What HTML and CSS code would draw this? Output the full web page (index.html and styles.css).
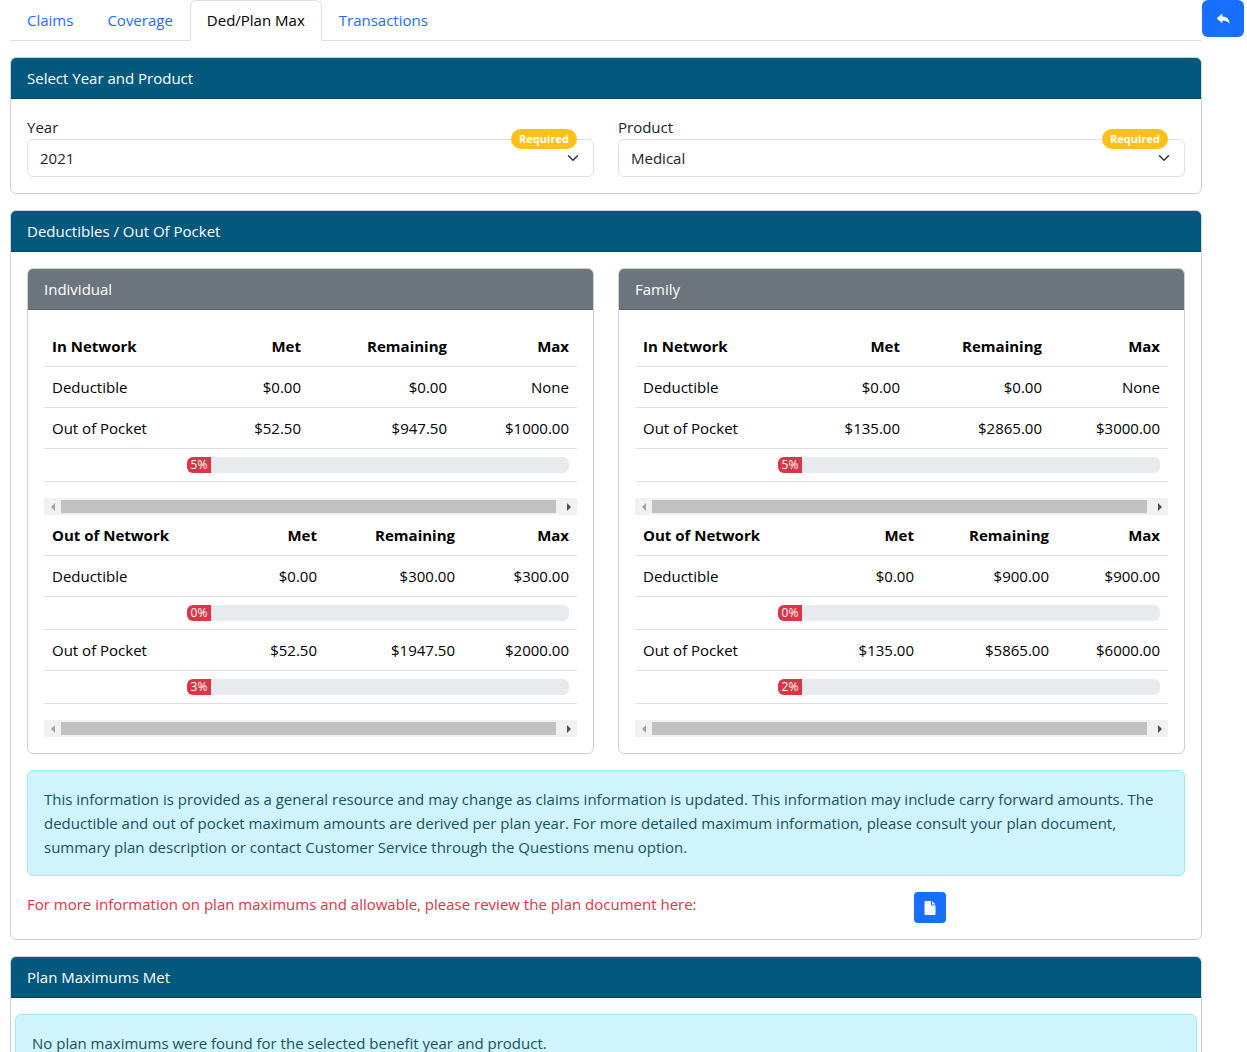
FILE: index.html
```html
<!DOCTYPE html>
<html lang="en">
<head>
<meta charset="utf-8">
<meta name="viewport" content="width=device-width, initial-scale=1">
<title>Ded/Plan Max</title>
<link rel="stylesheet" href="styles.css">
</head>
<body>
<div class="page">
  <main class="content">
    <nav class="tabs" aria-label="Benefit sections">
      <a class="tab" href="#claims">Claims</a>
      <a class="tab" href="#coverage">Coverage</a>
      <a class="tab tab-active" href="#plan-max" aria-current="page">Ded/Plan Max</a>
      <a class="tab" href="#transactions">Transactions</a>
    </nav>

    <section class="card">
      <h2 class="card-header">Select Year and Product</h2>
      <div class="card-body columns">
        <div class="field">
          <label for="year">Year</label>
          <div class="select-wrap">
            <select id="year" class="select" required><option>2021</option></select>
            <svg class="chevron" viewBox="0 0 16 16" aria-hidden="true"><path d="m2 5 6 6 6-6"/></svg>
            <span class="badge">Required</span>
          </div>
        </div>
        <div class="field">
          <label for="product">Product</label>
          <div class="select-wrap">
            <select id="product" class="select" required><option>Medical</option></select>
            <svg class="chevron" viewBox="0 0 16 16" aria-hidden="true"><path d="m2 5 6 6 6-6"/></svg>
            <span class="badge">Required</span>
          </div>
        </div>
      </div>
    </section>

    <section class="card">
      <h2 class="card-header">Deductibles / Out Of Pocket</h2>
      <div class="card-body stack">
        <div class="columns">
          <section class="card">
            <h3 class="card-header card-header-gray">Individual</h3>
            <div class="card-body">
              <table class="amounts">
                <colgroup><col class="w-135"><col class="w-130"><col class="w-146"><col></colgroup>
                <thead><tr><th>In Network</th><th>Met</th><th>Remaining</th><th>Max</th></tr></thead>
                <tbody>
                  <tr><td>Deductible</td><td>$0.00</td><td>$0.00</td><td>None</td></tr>
                  <tr><td>Out of Pocket</td><td>$52.50</td><td>$947.50</td><td>$1000.00</td></tr>
                  <tr><td></td><td colspan="3"><div class="progress"><div class="progress-bar">5%</div></div></td></tr>
                </tbody>
              </table>
              <div class="scrollbar" aria-hidden="true"><span class="arrow arrow-left"></span><span class="thumb"></span><span class="arrow arrow-right"></span></div>
              <table class="amounts">
                <colgroup><col class="w-135"><col class="w-146"><col class="w-138"><col></colgroup>
                <thead><tr><th>Out of Network</th><th>Met</th><th>Remaining</th><th>Max</th></tr></thead>
                <tbody>
                  <tr><td>Deductible</td><td>$0.00</td><td>$300.00</td><td>$300.00</td></tr>
                  <tr><td></td><td colspan="3"><div class="progress"><div class="progress-bar">0%</div></div></td></tr>
                  <tr><td>Out of Pocket</td><td>$52.50</td><td>$1947.50</td><td>$2000.00</td></tr>
                  <tr><td></td><td colspan="3"><div class="progress"><div class="progress-bar">3%</div></div></td></tr>
                </tbody>
              </table>
              <div class="scrollbar" aria-hidden="true"><span class="arrow arrow-left"></span><span class="thumb"></span><span class="arrow arrow-right"></span></div>
            </div>
          </section>
          <section class="card">
            <h3 class="card-header card-header-gray">Family</h3>
            <div class="card-body">
              <table class="amounts">
                <colgroup><col class="w-135"><col class="w-138"><col class="w-142"><col></colgroup>
                <thead><tr><th>In Network</th><th>Met</th><th>Remaining</th><th>Max</th></tr></thead>
                <tbody>
                  <tr><td>Deductible</td><td>$0.00</td><td>$0.00</td><td>None</td></tr>
                  <tr><td>Out of Pocket</td><td>$135.00</td><td>$2865.00</td><td>$3000.00</td></tr>
                  <tr><td></td><td colspan="3"><div class="progress"><div class="progress-bar">5%</div></div></td></tr>
                </tbody>
              </table>
              <div class="scrollbar" aria-hidden="true"><span class="arrow arrow-left"></span><span class="thumb"></span><span class="arrow arrow-right"></span></div>
              <table class="amounts">
                <colgroup><col class="w-135"><col class="w-152"><col class="w-135"><col></colgroup>
                <thead><tr><th>Out of Network</th><th>Met</th><th>Remaining</th><th>Max</th></tr></thead>
                <tbody>
                  <tr><td>Deductible</td><td>$0.00</td><td>$900.00</td><td>$900.00</td></tr>
                  <tr><td></td><td colspan="3"><div class="progress"><div class="progress-bar">0%</div></div></td></tr>
                  <tr><td>Out of Pocket</td><td>$135.00</td><td>$5865.00</td><td>$6000.00</td></tr>
                  <tr><td></td><td colspan="3"><div class="progress"><div class="progress-bar">2%</div></div></td></tr>
                </tbody>
              </table>
              <div class="scrollbar" aria-hidden="true"><span class="arrow arrow-left"></span><span class="thumb"></span><span class="arrow arrow-right"></span></div>
            </div>
          </section>
        </div>
        <p class="alert">This information is provided as a general resource and may change as claims information is updated. This information may include carry forward amounts. The deductible and out of pocket maximum amounts are derived per plan year. For more detailed maximum information, please consult your plan document, summary plan description or contact Customer Service through the Questions menu option.</p>
        <div class="document-row">
          <p class="document-note">For more information on plan maximums and allowable, please review the plan document here:</p>
          <button class="button button-small" type="button" aria-label="Open plan document">
            <svg class="icon-file" viewBox="0 0 12 16" aria-hidden="true"><path d="M1.500 1H7v3.500Q7 5.500 8 5.500h3.500V14q0 1-1 1h-9q-1 0-1-1V2q0-1 1-1zM8 1l3.500 3.500H8z"/></svg>
          </button>
        </div>
      </div>
    </section>

    <section class="card">
      <h2 class="card-header">Plan Maximums Met</h2>
      <div class="card-body card-body-tight">
        <p class="alert">No plan maximums were found for the selected benefit year and product.</p>
      </div>
    </section>
  </main>
  <button class="button" type="button" aria-label="Back">
    <svg class="icon-reply" viewBox="0 0 16 16" aria-hidden="true"><path d="M6.600 2.300Q7.300 1.800 7.300 2.700V5C12.500 5.200 15.500 7.800 15.300 13.800 13.700 10.600 11.200 9.700 7.300 9.700V12Q7.300 12.900 6.600 12.300L1.200 7.800Q.7 7.300 1.200 6.900z"/></svg>
  </button>
</div>
</body>
</html>
```
FILE: styles.css
```css
* { box-sizing: border-box; }

body {
  margin: 0;
  background: #fff;
  color: #212529;
  font: 15px/24px "Open Sans", "Noto Sans", sans-serif;
}

h2, h3, p { margin: 0; font-size: 15px; font-weight: 400; }

.page {
  display: grid;
  grid-template-columns: minmax(0, 1fr) 42px;
  align-items: start;
  padding: 0 3px 0 10px;
}

.content, .stack {
  display: flex;
  flex-direction: column;
  gap: 16px;
}

.tabs {
  display: flex;
  height: 41px;
  border-bottom: 1px solid #dee2e6;
}

.tab {
  height: 41px;
  padding: 8px 17px;
  color: #1a6fff;
  text-decoration: none;
}

.tab-active {
  padding: 7px 16px 8px;
  border: 1px solid #dee2e6;
  border-bottom-color: #fff;
  border-radius: 6px 6px 0 0;
  color: #000;
  background: #fff;
}

.card {
  min-width: 0;
  border: 1px solid #cfd0d1;
  border-radius: 6px;
}

.card-header {
  padding: 8px 16px;
  border-bottom: 1px solid #024a6c;
  border-radius: 5px 5px 0 0;
  background: #02587d;
  color: #fff;
}

.card-header-gray {
  border-bottom-color: #5a6169;
  background: #6c747d;
}

.card-body { padding: 16px; }
.card-body-tight { padding: 16px 4px; }

.columns {
  display: grid;
  grid-template-columns: repeat(2, minmax(0, 1fr));
  column-gap: 24px;
}

.field label { display: block; }
.select-wrap { position: relative; }

.select {
  display: block;
  width: 100%;
  height: 38px;
  padding: 0 36px 0 12px;
  border: 1px solid #dee2e6;
  border-radius: 6px;
  background: #fff;
  color: #212529;
  font: inherit;
  appearance: none;
}

.chevron {
  position: absolute;
  right: 13px;
  top: 13px;
  width: 16px;
  height: 12px;
  fill: none;
  stroke: #343a40;
  stroke-width: 2;
  stroke-linecap: round;
  stroke-linejoin: round;
  pointer-events: none;
}

.badge {
  position: absolute;
  top: -10px;
  right: 17px;
  width: 66px;
  border-radius: 10px;
  background: #ffc01a;
  color: #fff;
  font-size: 11px;
  font-weight: 700;
  line-height: 20px;
  text-align: center;
}

.amounts {
  width: 100%;
  margin-bottom: 16px;
  border-collapse: separate;
  border-spacing: 0;
  table-layout: fixed;
  color: #000;
}

.amounts th, .amounts td {
  padding: 8px;
  border-bottom: 1px solid #dee2e6;
  text-align: right;
  white-space: nowrap;
}

.amounts th:first-child, .amounts td:first-child { text-align: left; }
.amounts th { font-weight: 700; }

.w-130 { width: 130px; }
.w-135 { width: 135px; }
.w-138 { width: 138px; }
.w-142 { width: 142px; }
.w-146 { width: 146px; }
.w-152 { width: 152px; }

.progress {
  height: 16px;
  border-radius: 6px;
  overflow: hidden;
  background: #e7ebee;
}

.progress-bar {
  width: 24px;
  background: #dc3545;
  color: #fff;
  font-size: 12px;
  line-height: 16px;
  text-align: center;
}

.scrollbar {
  display: flex;
  align-items: center;
  height: 17px;
  background: #f1f1f1;
}

.thumb {
  flex: 1;
  height: 13px;
  margin-right: 4px;
  background: #c1c1c1;
}

.arrow {
  display: flex;
  justify-content: center;
  width: 17px;
}

.arrow::before {
  content: "";
  border: 4px solid transparent;
}

.arrow-left::before { border-left-width: 0; border-right-color: #a3a3a3; }
.arrow-right::before { border-right-width: 0; border-left-color: #505050; }

.alert {
  padding: 16px;
  border: 1px solid #9eeaf9;
  border-radius: 6px;
  background: #cff4fc;
  color: #19525f;
}

.document-row {
  display: grid;
  grid-template-columns: repeat(12, minmax(0, 1fr));
  column-gap: 24px;
  align-items: start;
}

.document-note {
  grid-column: span 9;
  color: #dc3545;
}

.button {
  display: flex;
  align-items: center;
  justify-content: center;
  height: 37px;
  padding: 0;
  border: 0;
  border-radius: 6px;
  background: #176eff;
  color: #fff;
}

.button-small {
  width: 32px;
  height: 31px;
  border-radius: 4px;
}

.button svg { fill: currentColor; }
.icon-reply { width: 16px; height: 14px; }
.icon-file { width: 12px; height: 16px; }
```
